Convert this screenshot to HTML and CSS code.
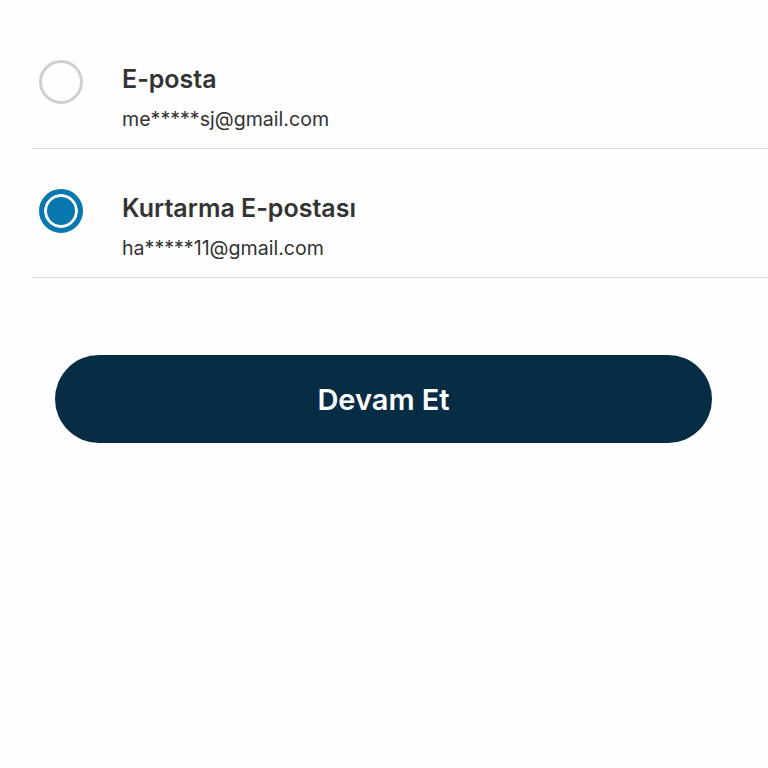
FILE: index.html
```html
<!DOCTYPE html>
<html lang="tr">
<head>
<meta charset="utf-8">
<link rel="stylesheet" href="styles.css">
</head>
<body>
<div class="page">
  <ul class="options">
    <li class="option">
      <span class="radio"></span>
      <div class="text">
        <div class="title">E-posta</div>
        <div class="sub">me*****sj@gmail.com</div>
      </div>
    </li>
    <li class="option">
      <span class="radio checked"></span>
      <div class="text">
        <div class="title">Kurtarma E-postası</div>
        <div class="sub">ha*****11@gmail.com</div>
      </div>
    </li>
  </ul>
  <button class="cta">Devam Et</button>
</div>
</body>
</html>
```
FILE: styles.css
```css
html, body {
  margin: 0;
  padding: 0;
  background: #fefefe;
}
body {
  font-family: Inter, Roboto, "Liberation Sans", sans-serif;
  color: #333333;
}
.page {
  padding-top: 20px;
}
.options {
  list-style: none;
  margin: 0 0 0 32px;
  padding: 0;
}
.option {
  display: flex;
  align-items: flex-start;
  height: 128px;
  border-bottom: 1px solid #dedede;
  padding-left: 7px;
}
.radio {
  box-sizing: border-box;
  width: 44px;
  height: 44px;
  border-radius: 50%;
  border: 3px solid #cfcfcf;
  flex: none;
  align-self: center;
  margin-top: -5px;
}
.radio.checked {
  border: 5px solid #0a78b0;
  background: #0a78b0;
  box-shadow: inset 0 0 0 3px #ffffff;
}
.text {
  margin-left: 39px;
  padding-top: 44px;
}
.title {
  font-size: 25px;
  font-weight: 600;
  line-height: 30px;
  color: #333333;
}
.sub {
  font-size: 19.6px;
  line-height: 28px;
  margin-top: 11px;
  color: #333333;
}
.cta {
  display: block;
  margin: 77px 0 0 55px;
  width: 657px;
  height: 88px;
  border: none;
  border-radius: 44px;
  background: #072d45;
  color: #ffffff;
  font-family: Inter, Roboto, "Liberation Sans", sans-serif;
  font-size: 29px;
  font-weight: 600;
  padding: 0;
}
```
